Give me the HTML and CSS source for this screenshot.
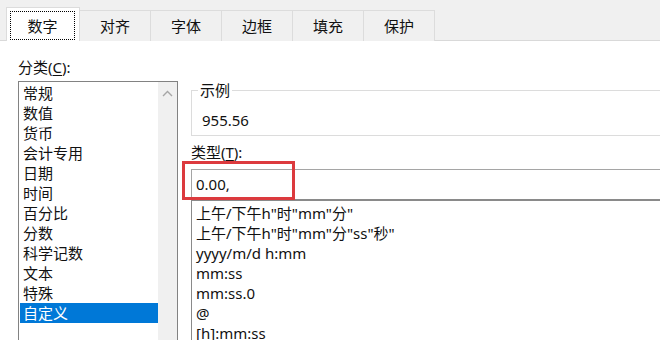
FILE: index.html
```html
<!DOCTYPE html>
<html lang="zh-CN">
<head>
<meta charset="utf-8">
<title>设置单元格格式</title>
<link rel="stylesheet" href="styles.css">
</head>
<body>
<div class="dialog">
  <div class="tabs">
    <div class="tab active"><span class="focus">数字</span></div>
    <div class="tab">对齐</div>
    <div class="tab">字体</div>
    <div class="tab">边框</div>
    <div class="tab">填充</div>
    <div class="tab">保护</div>
  </div>
  <div class="content">
    <div class="left">
      <div class="label">分类(<u>C</u>):</div>
      <div class="listbox">
        <ul class="items">
          <li>常规</li>
          <li>数值</li>
          <li>货币</li>
          <li>会计专用</li>
          <li>日期</li>
          <li>时间</li>
          <li>百分比</li>
          <li>分数</li>
          <li>科学记数</li>
          <li>文本</li>
          <li>特殊</li>
          <li class="selected">自定义</li>
        </ul>
        <div class="scrollbar">
          <svg class="arrow" width="11" height="7" viewBox="0 0 11 7"><path d="M1 6 L5.5 1.5 L10 6" fill="none" stroke="#a6a6a6" stroke-width="1.4"/></svg>
        </div>
      </div>
    </div>
    <div class="right">
      <fieldset class="sample">
        <legend>示例</legend>
        <div class="sample-value">955.56</div>
      </fieldset>
      <div class="label type-label">类型(<u>T</u>):</div>
      <div class="typebox">
        <div class="input">0.00,</div>
        <div class="mark"></div>
      </div>
      <ul class="formats">
        <li>上午/下午h"时"mm"分"</li>
        <li>上午/下午h"时"mm"分"ss"秒"</li>
        <li>yyyy/m/d h:mm</li>
        <li>mm:ss</li>
        <li>mm:ss.0</li>
        <li>@</li>
        <li>[h]:mm:ss</li>
      </ul>
    </div>
  </div>
</div>
</body>
</html>
```
FILE: styles.css
```css
* { box-sizing: border-box; }
html, body { margin: 0; padding: 0; }
body {
  width: 660px;
  height: 340px;
  overflow: hidden;
  background: #ffffff;
  font-family: "Noto Sans", "Noto Sans CJK SC", sans-serif;
  font-size: 15px;
  color: #111;
}
.dialog { width: 660px; height: 340px; overflow: hidden; }

.tabs {
  height: 41px;
  background: #f0f0f0;
  border-bottom: 1px solid #d9d9d9;
  display: flex;
  align-items: flex-end;
  padding-left: 6px;
}
.tab {
  width: 71px;
  height: 31px;
  border-top: 1px solid #dcdcdc;
  border-right: 1px solid #dcdcdc;
  background: #f0f0f0;
  display: flex;
  align-items: center;
  justify-content: center;
  line-height: 20px;
  margin-bottom: -1px;
  padding-bottom: 1px;
}
.tab.active {
  width: 74px;
  height: 34px;
  background: #ffffff;
  border: 1px solid #dcdcdc;
  border-bottom: none;
  align-items: stretch;
  justify-content: stretch;
  padding: 3px 4px 1px 3px;
}
.focus {
  flex: 1;
  border: 1px dotted #000;
  display: flex;
  align-items: center;
  justify-content: center;
}

.content {
  display: flex;
  gap: 13px;
  padding: 16px 0 0 18px;
}
.label { line-height: 20px; height: 20px; }
.label u { text-decoration: underline; text-underline-offset: 2px; }

.left { width: 160px; flex: none; }
.left .label { margin-bottom: 4px; }
.listbox {
  height: 300px;
  border: 1px solid #828282;
  display: flex;
}
.items {
  list-style: none;
  margin: 0;
  padding: 1px 0 0 1px;
  flex: 1;
}
.items li {
  height: 20px;
  line-height: 20px;
  padding-left: 3px;
}
.items li.selected {
  background: #0078d7;
  color: #fff;
}
.scrollbar {
  width: 19px;
  background: #f0f0f0;
  display: flex;
  justify-content: center;
  padding-top: 8px;
}
.arrow { display: block; }

.right { flex: 1; padding-top: 23px; }
.sample {
  margin: 0;
  padding: 0 0 5px 6px;
  border: 1px solid #dcdcdc;
  min-width: 0;
  width: 480px;
}
.sample legend {
  padding: 0 2px;
  line-height: 20px;
}
.sample-value {
  line-height: 20px;
  padding: 10px 0 0 4px;
}
.type-label { margin-top: 6px; }
.typebox {
  position: relative;
  margin-top: 7px;
}
.input {
  height: 30px;
  border-top: 1px solid #a5a5a5;
  border-left: 1px solid #a5a5a5;
  line-height: 28px;
  padding-left: 4px;
}
.mark {
  position: absolute;
  left: -9px;
  top: -8px;
  width: 113px;
  height: 39px;
  border: 3px solid #dc3a3e;
}
.formats {
  list-style: none;
  margin: 0;
  padding: 2px 0 0 4px;
  border-top: 2px solid #8a8a8a;
  border-left: 1px solid #8a8a8a;
  height: 160px;
}
.formats li {
  height: 20px;
  line-height: 20px;
}
```
